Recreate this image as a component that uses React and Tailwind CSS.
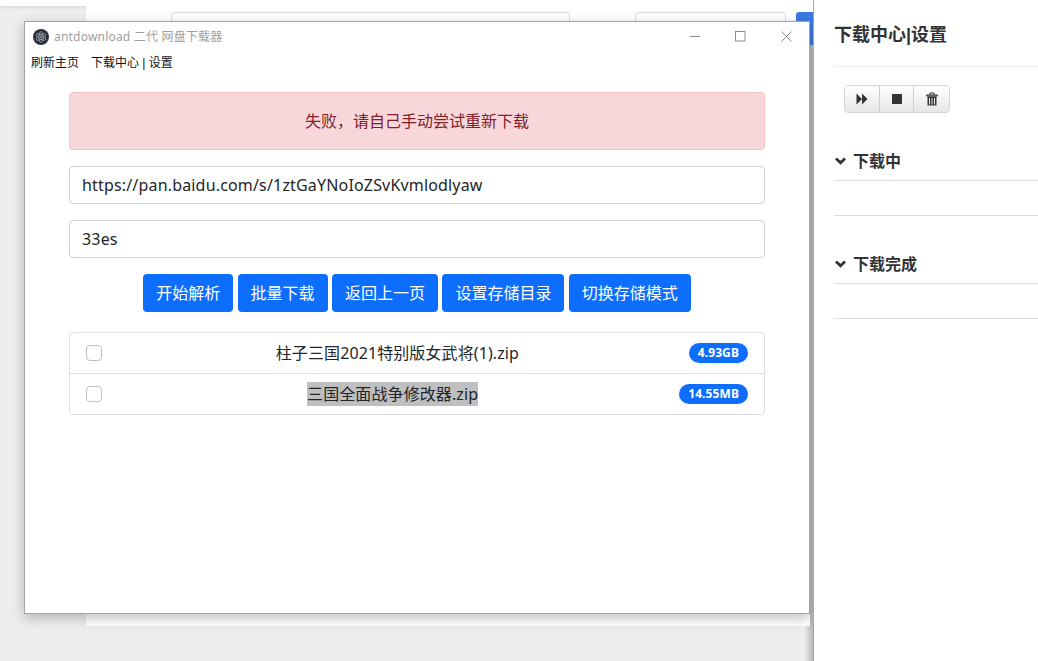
const font = "font-['Noto_Sans','Noto_Sans_CJK_SC',sans-serif]";
const arialFont = "font-['Liberation_Sans','Noto_Sans_CJK_SC',sans-serif]";

const buttons = ["开始解析", "批量下载", "返回上一页", "设置存储目录", "切换存储模式"];

const files = [
  { name: "柱子三国2021特别版女武将(1).zip", size: "4.93GB" },
  { name: "三国全面战争修改器.zip", size: "14.55MB", selected: true },
];

function ElectronLogo() {
  return (
    <svg width="16" height="16" viewBox="0 0 16 16" className="shrink-0">
      <circle cx="8" cy="8" r="8" fill="#2b2e3a" />
      <g fill="none" stroke="#a9b4bd" strokeWidth="0.7">
        <ellipse cx="8" cy="8" rx="5.4" ry="2.2" transform="rotate(30 8 8)" />
        <ellipse cx="8" cy="8" rx="5.4" ry="2.2" transform="rotate(90 8 8)" />
        <ellipse cx="8" cy="8" rx="5.4" ry="2.2" transform="rotate(150 8 8)" />
      </g>
      <circle cx="8" cy="8" r="0.9" fill="#a9b4bd" />
    </svg>
  );
}

function WindowControls() {
  return (
    <div className="flex items-center gap-[31px] pr-[17px]">
      <svg width="11" height="11" viewBox="0 0 11 11">
        <path d="M0 5.5H10" stroke="#8c8c8c" />
      </svg>
      <svg width="11" height="11" viewBox="0 0 11 11" className="ml-[3px]">
        <rect x="0.5" y="0.5" width="9.5" height="9.5" fill="none" stroke="#8c8c8c" />
      </svg>
      <svg width="11" height="11" viewBox="0 0 11 11" className="ml-[4px]">
        <path d="M0.5 0.5L10.5 10.5M10.5 0.5L0.5 10.5" stroke="#8c8c8c" />
      </svg>
    </div>
  );
}

function FileRow({ file, last }) {
  return (
    <div className={"flex items-center justify-between px-4 " + (last ? "h-[40px]" : "h-[41px] border-b border-[#dfdfdf]")}>
      <span className="h-4 w-4 rounded-[4px] border border-[#bfbfbf] bg-white" />
      <span className={"ml-[4px] text-[16px] leading-6 tracking-[0.1px] text-[#212529] " + (file.selected ? "bg-[#bfbfbf]" : "")}>
        {file.name}
      </span>
      <span className="rounded-full bg-[#0d6efd] px-[9px] text-[12px] font-bold leading-[20px] tracking-[0.1px] text-white">
        {file.size}
      </span>
    </div>
  );
}

function DownloadWindow() {
  return (
    <div className="absolute left-[24px] top-[21px] flex h-[593px] w-[786px] flex-col border border-[#a3a3a3] bg-white shadow-[0_4px_12px_rgba(0,0,0,0.25)]">
      <div className="flex h-[29px] shrink-0 items-center justify-between pl-[8px]">
        <div className="flex items-center gap-[5px] text-[12px] tracking-[0.2px] text-[#a0a0a0]">
          <ElectronLogo />
          <span>antdownload 二代 网盘下载器</span>
        </div>
        <WindowControls />
      </div>
      <div className={"flex h-[24px] shrink-0 items-center gap-3 pl-[6px] text-[12px] text-[#111] " + arialFont}>
        <span>刷新主页</span>
        <span>下载中心 | 设置</span>
      </div>
      <div className="flex flex-col px-[44px] pt-[17px]">
        <div className="flex h-[58px] items-center justify-center rounded-[4px] border border-[#f5c2c7] bg-[#f8d7da] text-[16px] text-[#842029]">
          失败，请自己手动尝试重新下载
        </div>
        <input
          readOnly
          value="https://pan.baidu.com/s/1ztGaYNoIoZSvKvmlodlyaw"
          className="mt-4 h-[38px] rounded-[4px] border border-[#ced4da] px-3 text-[16px] tracking-[0.17px] text-[#212529] outline-none"
        />
        <input
          readOnly
          value="33es"
          className="mt-4 h-[38px] rounded-[4px] border border-[#ced4da] px-3 text-[16px] tracking-[0.17px] text-[#212529] outline-none"
        />
        <div className="mt-4 flex justify-center gap-[4.4px]">
          {buttons.map((label) => (
            <button key={label} className="h-[38px] rounded-[4px] bg-[#0d6efd] px-[13px] text-[16px] text-white">
              {label}
            </button>
          ))}
        </div>
        <div className="mt-5 rounded-[4px] border border-[#dfdfdf]">
          {files.map((file, i) => (
            <FileRow key={file.name} file={file} last={i === files.length - 1} />
          ))}
        </div>
      </div>
    </div>
  );
}

function BackgroundPage() {
  return (
    <div className="relative min-w-0 flex-1 overflow-hidden">
      <div className="h-[6px] bg-white shadow-[0_1px_4px_rgba(0,0,0,0.12)]" />
      <div className="ml-[86px] h-[620px] bg-white">
        <div className="flex items-start gap-[10px] pl-[85px] pt-[6px]">
          <div className="h-[34px] w-[399px] shrink-0 rounded-[3px] border border-[#dcdcdc]" />
          <div className="ml-[55px] h-[34px] w-[151px] shrink-0 rounded-[3px] border border-[#dcdcdc]" />
          <div className="h-[34px] w-[40px] shrink-0 rounded-[3px] bg-[#3b7be0]" />
        </div>
      </div>
      <div className="absolute bottom-[35px] right-0 top-[45px] w-[3px] bg-[#b8b8b8]" />
      <div className="absolute bottom-0 right-0 h-[35px] w-[9px] bg-gradient-to-r from-transparent to-[#0000003a]" />
    </div>
  );
}

function GroupButton({ children, last }) {
  return (
    <button className={"flex h-[26px] w-[35px] items-center justify-center bg-gradient-to-b from-white to-[#e6e6e6] " + (last ? "" : "border-r border-[#cfcfcf]")}>
      {children}
    </button>
  );
}

function SectionBlock({ title, className }) {
  return (
    <div className={className}>
      <div className="flex h-[32px] items-center gap-[7px] border-b border-[#dcdcdc] pb-[8px] text-[16px] font-bold text-[#333]">
        <svg width="11" height="8" viewBox="0 0 11 8" className="ml-[1px]">
          <path d="M1 1.5L5.5 5.8L10 1.5" fill="none" stroke="#333" strokeWidth="2.8" />
        </svg>
        {title}
      </div>
      <div className="h-[35px] border-b border-[#dcdcdc]" />
    </div>
  );
}

function DownloadPanel() {
  return (
    <aside className="relative w-[225px] shrink-0 border-l border-[#a6a6a6] bg-white pl-[20px]">
      <h2 className={"flex h-[67px] items-center border-b border-[#eeeeee] pt-[4px] text-[18px] font-bold text-[#333] " + arialFont}>
        下载中心|设置
      </h2>
      <div className="ml-[10px] mt-[18px] flex w-[106px] overflow-hidden rounded-[4px] border border-[#d4d4d4]">
        <GroupButton>
          <svg width="12" height="12" viewBox="0 0 12 12">
            <path d="M0.5 0.5L6 6L0.5 11.5ZM6 0.5L11.5 6L6 11.5Z" fill="#333" />
          </svg>
        </GroupButton>
        <GroupButton>
          <svg width="10" height="10" viewBox="0 0 10 10">
            <rect width="10" height="10" fill="#333" />
          </svg>
        </GroupButton>
        <GroupButton last>
          <svg width="12" height="14" viewBox="0 0 12 14">
            <path d="M0.5 3H11.5V4H0.5ZM4 3V1H8V3" fill="none" stroke="#333" strokeWidth="1" />
            <path d="M1.5 4.5H10.5V13.5H1.5ZM3 6V12.5H4V6ZM5.5 6V12.5H6.5V6ZM8 6V12.5H9V6Z" fill="#333" fillRule="evenodd" />
          </svg>
        </GroupButton>
      </div>
      <SectionBlock title="下载中" className="mt-[36px]" />
      <SectionBlock title="下载完成" className="mt-[36px]" />
    </aside>
  );
}

export default function App() {
  return (
    <div className={"relative flex h-[661px] w-[1038px] overflow-hidden bg-[#eeeeee] " + font}>
      <BackgroundPage />
      <DownloadWindow />
      <DownloadPanel />
    </div>
  );
}
